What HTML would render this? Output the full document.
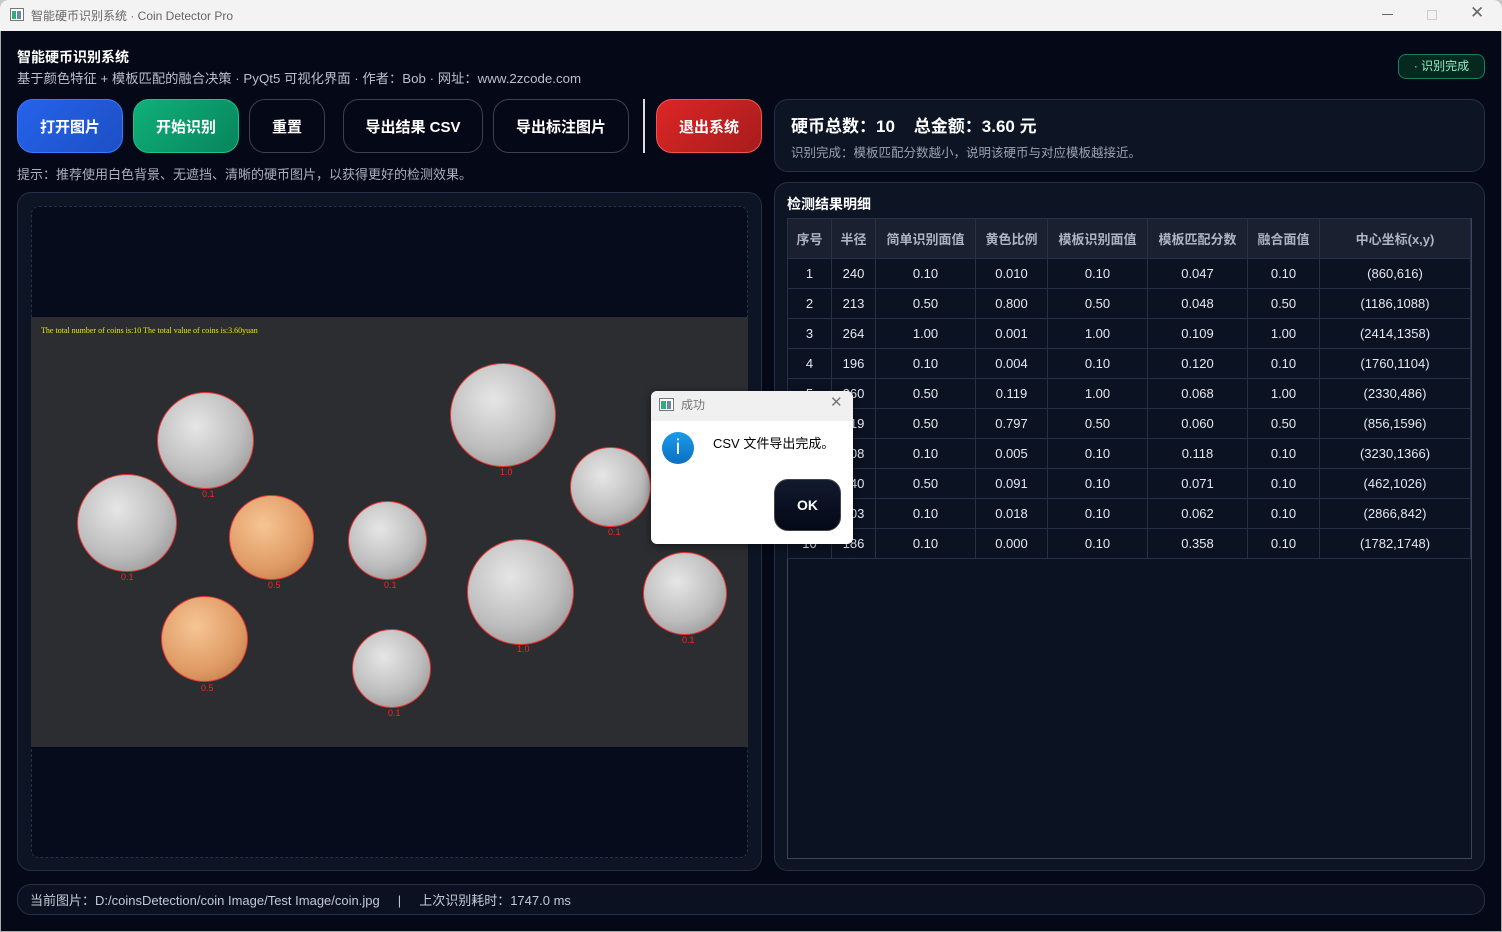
<!DOCTYPE html>
<html><head><meta charset="utf-8"><style>
*{box-sizing:border-box;margin:0;padding:0}
body{width:1502px;height:932px;background:#c8c8c8;font-family:"Liberation Sans","Noto Sans CJK SC",sans-serif;overflow:hidden;position:relative}
.win{position:absolute;left:0;top:0;width:1502px;height:932px;outline:1px solid #aaa;outline-offset:-1px;border-radius:8px 8px 0 0;background:#050816;overflow:hidden}
.tb{position:absolute;left:0;top:0;width:100%;height:31px;background:#f3f3f3;color:#666;font-size:12px}
.abs{position:absolute}
.btn{position:absolute;top:99px;height:54px;border-radius:16px;color:#fff;font-weight:bold;font-size:15px;display:flex;align-items:center;justify-content:center;border:1px solid #3a4152;background:#050816}
.card{position:absolute;border:1px solid #273044;border-radius:14px;background:#0d1424}
table{border-collapse:collapse;color:#e6e8ee;font-size:13px}
td,th{border:1px solid #263046;text-align:center;height:30px}
th{height:40px;color:#aeb4c2;font-weight:bold;background:#1a2030}
.coin{position:absolute;border-radius:50%;border:1px solid #e33}
.s{background:radial-gradient(circle at 40% 35%,#e6e6e6,#bdbdbd 55%,#858585 100%)}
.c{background:radial-gradient(circle at 40% 35%,#f6c594,#df9a64 60%,#b2703e)}
.lb{position:absolute;color:#f22;font-size:9px}
</style></head><body><div class="win">
<div class="tb">
<svg class="abs" style="left:10px;top:8px" width="14" height="13"><rect x=".5" y=".5" width="13" height="12" fill="#fff" stroke="#777"/><rect x="2" y="3" width="4" height="8" fill="#3a7"/><rect x="7" y="3" width="4" height="8" fill="#68a"/></svg>
<div class="abs" style="left:31px;top:7px">智能硬币识别系统 · Coin Detector Pro</div>
<div class="abs" style="left:1382px;top:14px;width:11px;height:1px;background:#666"></div>
<div class="abs" style="left:1427px;top:10px;width:10px;height:10px;border:1px solid #ccc"></div>
<div class="abs" style="left:1470px;top:3px;font-size:17px;color:#666">✕</div>
</div>
<div class="abs" style="left:17px;top:47px;color:#fff;font-weight:bold;font-size:14px">智能硬币识别系统</div>
<div class="abs" style="left:17px;top:68px;color:#b9bfcc;font-size:13.3px">基于颜色特征 + 模板匹配的融合决策 · PyQt5 可视化界面 · 作者：Bob · 网址：www.2zcode.com</div>
<div class="abs" style="left:1398px;top:54px;width:87px;height:25px;border:1px solid #17805a;border-radius:8px;background:#05281f;color:#8ef0c8;font-size:12px;text-align:center;line-height:23px">· 识别完成</div>
<div class="btn" style="left:17px;width:106px;background:linear-gradient(135deg,#2563eb,#1d4fc4);border-color:#3b7bff">打开图片</div>
<div class="btn" style="left:133px;width:106px;background:linear-gradient(135deg,#10b07a,#07855c);border-color:#19c58b">开始识别</div>
<div class="btn" style="left:249px;width:76px">重置</div>
<div class="btn" style="left:343px;width:140px">导出结果 CSV</div>
<div class="btn" style="left:493px;width:136px">导出标注图片</div>
<div class="abs" style="left:643px;top:99px;width:2px;height:54px;background:#ddd"></div>
<div class="btn" style="left:656px;width:106px;background:linear-gradient(135deg,#dc2626,#a81c1c);border-color:#f05555">退出系统</div>
<div class="abs" style="left:17px;top:164px;color:#aab0bd;font-size:13px">提示：推荐使用白色背景、无遮挡、清晰的硬币图片，以获得更好的检测效果。</div>

<div class="card" style="left:17px;top:192px;width:745px;height:679px"></div>
<div class="abs" style="left:31px;top:206px;width:717px;height:652px;border:1px dashed #27314a;border-radius:8px;background:#070c1c"></div>
<div class="abs" style="left:31px;top:317px;width:717px;height:430px;background:#2b2d31">
<div class="abs" style="left:10px;top:9px;color:#e8e800;font-size:8px;font-family:'Liberation Serif',serif">The total number of coins is:10 The total value of coins is:3.60yuan</div>
</div>
<div class="coin s" style="left:157px;top:392px;width:97px;height:97px"></div><div class="lb" style="left:202px;top:489px">0.1</div>
<div class="coin s" style="left:77px;top:474px;width:100px;height:98px"></div><div class="lb" style="left:121px;top:572px">0.1</div>
<div class="coin c" style="left:229px;top:495px;width:85px;height:85px"></div><div class="lb" style="left:268px;top:580px">0.5</div>
<div class="coin s" style="left:348px;top:501px;width:79px;height:79px"></div><div class="lb" style="left:384px;top:580px">0.1</div>
<div class="coin s" style="left:450px;top:363px;width:106px;height:104px"></div><div class="lb" style="left:500px;top:467px">1.0</div>
<div class="coin s" style="left:570px;top:447px;width:81px;height:80px"></div><div class="lb" style="left:608px;top:527px">0.1</div>
<div class="coin s" style="left:467px;top:539px;width:107px;height:106px"></div><div class="lb" style="left:517px;top:644px">1.0</div>
<div class="coin s" style="left:643px;top:552px;width:84px;height:83px"></div><div class="lb" style="left:682px;top:635px">0.1</div>
<div class="coin c" style="left:161px;top:596px;width:87px;height:86px"></div><div class="lb" style="left:201px;top:683px">0.5</div>
<div class="coin s" style="left:352px;top:629px;width:79px;height:79px"></div><div class="lb" style="left:388px;top:708px">0.1</div>

<div class="card" style="left:774px;top:99px;width:711px;height:73px">
<div class="abs" style="left:16px;top:12px;color:#fff;font-weight:bold;font-size:17px">硬币总数：10&nbsp;&nbsp;&nbsp;&nbsp;总金额：3.60 元</div>
<div class="abs" style="left:16px;top:42px;color:#9aa1b0;font-size:12.5px">识别完成：模板匹配分数越小，说明该硬币与对应模板越接近。</div>
</div>
<div class="card" style="left:774px;top:182px;width:711px;height:689px">
<div class="abs" style="left:12px;top:11px;color:#fff;font-weight:bold;font-size:14px">检测结果明细</div>
</div>
<div class="abs" style="left:787px;top:218px;width:685px;height:641px;border:1px solid #3d4558;background:#0b1222">
<table style="width:684px;margin:-1px 0 0 -1px">
<tr><th style="width:44px">序号</th><th style="width:44px">半径</th><th style="width:100px">简单识别面值</th><th style="width:72px">黄色比例</th><th style="width:100px">模板识别面值</th><th style="width:100px">模板匹配分数</th><th style="width:72px">融合面值</th><th>中心坐标(x,y)</th></tr>
<tr><td>1</td><td>240</td><td>0.10</td><td>0.010</td><td>0.10</td><td>0.047</td><td>0.10</td><td>(860,616)</td></tr>
<tr><td>2</td><td>213</td><td>0.50</td><td>0.800</td><td>0.50</td><td>0.048</td><td>0.50</td><td>(1186,1088)</td></tr>
<tr><td>3</td><td>264</td><td>1.00</td><td>0.001</td><td>1.00</td><td>0.109</td><td>1.00</td><td>(2414,1358)</td></tr>
<tr><td>4</td><td>196</td><td>0.10</td><td>0.004</td><td>0.10</td><td>0.120</td><td>0.10</td><td>(1760,1104)</td></tr>
<tr><td>5</td><td>260</td><td>0.50</td><td>0.119</td><td>1.00</td><td>0.068</td><td>1.00</td><td>(2330,486)</td></tr>
<tr><td>6</td><td>219</td><td>0.50</td><td>0.797</td><td>0.50</td><td>0.060</td><td>0.50</td><td>(856,1596)</td></tr>
<tr><td>7</td><td>208</td><td>0.10</td><td>0.005</td><td>0.10</td><td>0.118</td><td>0.10</td><td>(3230,1366)</td></tr>
<tr><td>8</td><td>240</td><td>0.50</td><td>0.091</td><td>0.10</td><td>0.071</td><td>0.10</td><td>(462,1026)</td></tr>
<tr><td>9</td><td>203</td><td>0.10</td><td>0.018</td><td>0.10</td><td>0.062</td><td>0.10</td><td>(2866,842)</td></tr>
<tr><td>10</td><td>186</td><td>0.10</td><td>0.000</td><td>0.10</td><td>0.358</td><td>0.10</td><td>(1782,1748)</td></tr>
</table></div>

<div class="card" style="left:17px;top:884px;width:1468px;height:31px;background:#0b1120">
<div class="abs" style="left:12px;top:5px;color:#c4c9d4;font-size:13px;white-space:pre">当前图片：D:/coinsDetection/coin Image/Test Image/coin.jpg     |     上次识别耗时：1747.0 ms</div>
</div>

<div class="abs" style="left:651px;top:391px;width:202px;height:153px;background:#fff;border-radius:6px;overflow:hidden;box-shadow:0 2px 8px rgba(0,0,0,.5)">
<div class="abs" style="left:0;top:0;width:100%;height:30px;background:#f0f0f0"></div>
<svg class="abs" style="left:8px;top:7px" width="15" height="13"><rect x=".5" y=".5" width="14" height="12" fill="#fff" stroke="#777"/><rect x="2" y="3" width="5" height="8" fill="#3a7"/><rect x="8" y="3" width="4" height="8" fill="#68a"/></svg>
<div class="abs" style="left:30px;top:5px;color:#777;font-size:12px">成功</div>
<div class="abs" style="left:179px;top:2px;color:#777;font-size:15px">✕</div>
<div class="abs" style="left:11px;top:41px;width:32px;height:32px;border-radius:50%;background:linear-gradient(#1e9be6,#0a6fc4);color:#fff;text-align:center;font-size:21px;line-height:32px">i</div>
<div class="abs" style="left:62px;top:42px;color:#000;font-size:13px">CSV 文件导出完成。</div>
<div class="abs" style="left:123px;top:88px;width:67px;height:52px;border-radius:14px;background:linear-gradient(#111a2e,#040816);border:1px solid #444;color:#fff;font-weight:bold;font-size:14px;text-align:center;line-height:50px">OK</div>
</div>
</div></body></html>
